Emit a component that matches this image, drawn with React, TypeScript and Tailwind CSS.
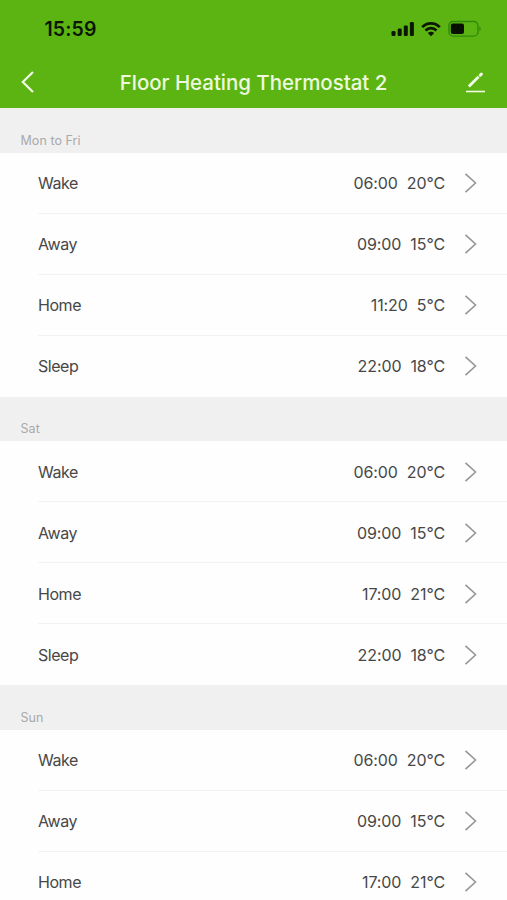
interface Period {
  name: string;
  time: string;
  temp: string;
}

interface Day {
  label: string;
  periods: Period[];
}

const schedule: Day[] = [
  {
    label: "Mon to Fri",
    periods: [
      { name: "Wake", time: "06:00", temp: "20°C" },
      { name: "Away", time: "09:00", temp: "15°C" },
      { name: "Home", time: "11:20", temp: "5°C" },
      { name: "Sleep", time: "22:00", temp: "18°C" },
    ],
  },
  {
    label: "Sat",
    periods: [
      { name: "Wake", time: "06:00", temp: "20°C" },
      { name: "Away", time: "09:00", temp: "15°C" },
      { name: "Home", time: "17:00", temp: "21°C" },
      { name: "Sleep", time: "22:00", temp: "18°C" },
    ],
  },
  {
    label: "Sun",
    periods: [
      { name: "Wake", time: "06:00", temp: "20°C" },
      { name: "Away", time: "09:00", temp: "15°C" },
      { name: "Home", time: "17:00", temp: "21°C" },
    ],
  },
];

function SignalIcon() {
  return (
    <svg width="24" height="16" viewBox="0 0 24 16" fill="#0b1703">
      <rect x="0.5" y="10" width="4" height="5" rx="1.2" />
      <rect x="6.7" y="7.6" width="4" height="7.4" rx="1.2" />
      <rect x="12.8" y="4.4" width="4" height="10.6" rx="1.2" />
      <rect x="18.9" y="1" width="4" height="14" rx="1.2" />
    </svg>
  );
}

function WifiIcon() {
  return (
    <svg width="20" height="16" viewBox="0 0 20 16" fill="none" stroke="#0b1703" strokeWidth="2.7">
      <path d="M1.2 6.2C6 1 14 1 18.8 6.2" />
      <path d="M4.5 9.5C7.6 6.4 12.4 6.4 15.5 9.5" />
      <path d="M10 15.2L6.8 12C8.6 10.3 11.4 10.3 13.2 12Z" fill="#0b1703" stroke="none" />
    </svg>
  );
}

function BatteryIcon() {
  return (
    <svg width="34" height="18" viewBox="0 0 34 18">
      <rect x="0.9" y="1.5" width="29" height="14.6" rx="4.2" fill="none" stroke="#2f8a0c" strokeWidth="1.4" />
      <rect x="2.8" y="3.5" width="13.2" height="10.6" rx="2" fill="#071002" />
      <path d="M31.3 6.3C33.2 7.1 33.2 10.5 31.3 11.3Z" fill="#2f8a0c" />
    </svg>
  );
}

function Header() {
  return (
    <header className="h-[108px] bg-[#5cb413]">
      <div className="flex h-[57px] items-center justify-between pl-[44.5px] pr-[25px]">
        <span className="pt-0.5 text-[19.5px] font-semibold tracking-[0.1px] text-[#0b1703]">15:59</span>
        <div className="flex items-center">
          <SignalIcon />
          <span className="w-[6px]" />
          <WifiIcon />
          <span className="w-[7px]" />
          <BatteryIcon />
        </div>
      </div>
      <div className="flex h-[50px] items-center justify-between pl-5 pr-5">
        <svg width="22" height="24" viewBox="0 0 22 24" fill="none" stroke="#f1fbe6" strokeWidth="2.2">
          <path d="M13 2L2.8 12L13 22" />
        </svg>
        <h1 className="pt-0.5 text-[20.5px] font-medium tracking-[-0.04px] text-[#ecf9df]">Floor Heating Thermostat 2</h1>
        <svg width="22" height="22" viewBox="0 0 22 22" fill="none" stroke="#f1fbe6">
          <path d="M3.8 15.6L13.6 5.8" strokeWidth="2.8" />
          <path d="M15.2 4.3L16.4 3.1" strokeWidth="3" strokeLinecap="round" />
          <path d="M1 20.5H20" strokeWidth="1.6" />
        </svg>
      </div>
    </header>
  );
}

function PeriodRow({ name, time, temp }: Period) {
  return (
    <li className="group pl-[38px]">
      <div className="flex h-[61px] items-center border-b border-[#f2f2f2] pr-[30px] pt-px text-base text-[#474747] group-last:border-transparent">
        <span className="grow tracking-[-0.45px]">{name}</span>
        <span className="mr-[9px] tracking-[-0.1px]">{time}</span>
        <span className="tracking-[-0.1px]">{temp}</span>
        <svg className="ml-[19px]" width="13" height="22" viewBox="0 0 13 22" fill="none" stroke="#979797" strokeWidth="1.6">
          <path d="M1.5 1.8L11.5 11L1.5 20.2" />
        </svg>
      </div>
    </li>
  );
}

function DaySection({ label, periods }: Day) {
  return (
    <section>
      <h2 className="flex h-[44.5px] items-end bg-[#f0f0f0] pb-[3px] pl-[20.5px] text-[12.5px] leading-[18px] tracking-[0.05px] text-[#a9a9a9]">
        {label}
      </h2>
      <ul>
        {periods.map((period) => (
          <PeriodRow key={period.name} {...period} />
        ))}
      </ul>
    </section>
  );
}

export default function App() {
  return (
    <div className="h-[900px] w-[507px] overflow-hidden bg-[#fefefe] font-['Inter',sans-serif]">
      <Header />
      {schedule.map((day) => (
        <DaySection key={day.label} {...day} />
      ))}
    </div>
  );
}
